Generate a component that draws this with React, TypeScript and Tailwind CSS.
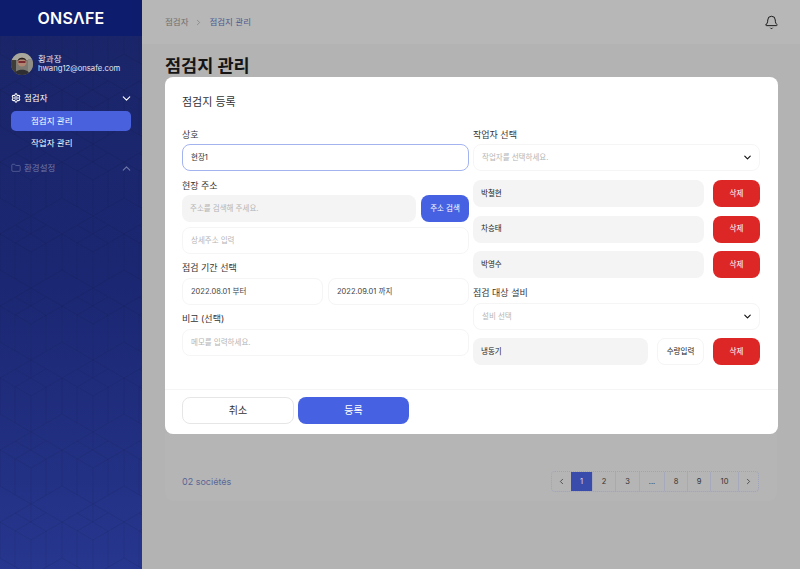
import { Bell, ChevronDown, ChevronLeft, ChevronRight, ChevronUp, Folder, Settings } from "lucide-react";

const FONT = "font-['Inter','Noto_Sans_CJK_KR',sans-serif]";

const pages = [
  { label: "1", w: "w-[22px]", active: true },
  { label: "2", w: "w-[23px]" },
  { label: "3", w: "w-[24px]" },
  { label: "...", w: "w-[25px]" },
  { label: "8", w: "w-[23px]" },
  { label: "9", w: "w-[23px]" },
  { label: "10", w: "w-[28px]" },
];

const Label = ({ text, className = "" }: { text: string; className?: string }) => (
  <div className={`h-3 text-[9px] leading-3 text-[#333333] ${className}`}>{text}</div>
);

const Field = ({ text, className = "" }: { text: string; className?: string }) => (
  <div className={`flex h-[27px] items-center rounded-lg border bg-white px-2 text-[7.5px] ${className}`}>
    {text}
  </div>
);

const DeleteButton = () => (
  <button className="flex h-[27px] w-[47px] shrink-0 items-center justify-center rounded-lg bg-[#dd2626] text-[7.5px] text-white">
    삭제
  </button>
);

const SelectBox = ({ text }: { text: string }) => (
  <div className="flex h-[27px] items-center justify-between rounded-lg border border-[#f5f5f5] bg-white pl-2 pr-[6px] text-[7.5px] text-[#b5b5b5]">
    <span>{text}</span>
    <ChevronDown className="h-[11px] w-[11px] text-[#111111]" strokeWidth={2.5} />
  </div>
);

const Worker = ({ name }: { name: string }) => (
  <div className="flex gap-[9px]">
    <div className="flex h-[27px] flex-1 items-center rounded-lg bg-[#f4f4f4] px-2 text-[7.5px] text-[#222222]">{name}</div>
    <DeleteButton />
  </div>
);

const SidebarPattern = () => (
  <svg className="absolute inset-0 h-full w-full" aria-hidden="true">
    <defs>
      <pattern id="cubes" width="62" height="72" patternUnits="userSpaceOnUse">
        <path
          d="M31 0L62 18V54L31 72L0 54V18ZM31 0V18M0 18L31 36L62 18M31 36V72M15 27V63M46 27V63M15 9L46 27M46 9L15 27"
          fill="none"
          stroke="#000000"
          strokeOpacity="0.07"
          strokeWidth="1"
        />
      </pattern>
    </defs>
    <rect width="100%" height="100%" fill="url(#cubes)" />
  </svg>
);

const Avatar = () => (
  <svg viewBox="0 0 22 22" className="h-[22px] w-[22px] shrink-0 rounded-full">
    <rect width="22" height="22" fill="#7c7a72" />
    <rect x="0" y="0" width="22" height="7" fill="#a8a89e" />
    <rect x="0" y="7" width="5" height="15" fill="#3f3d38" />
    <rect x="17" y="6" width="5" height="16" fill="#8f8d84" />
    <circle cx="11" cy="9" r="4.5" fill="#b08672" />
    <path d="M6.5 8C7 3.5 15 3.5 15.5 8L13 6.5H9Z" fill="#25221f" />
    <rect x="7.5" y="8" width="7" height="2" fill="#7a2a30" />
    <path d="M3 22C4 15 18 15 19 22Z" fill="#2e2e33" />
  </svg>
);

const Sidebar = () => (
  <aside className="relative flex h-full w-[142px] shrink-0 flex-col overflow-hidden bg-gradient-to-b from-[#1a2568] via-[#1b2772] to-[#27368e] text-white">
    <SidebarPattern />
    <div className="relative flex h-[36px] items-center justify-center bg-[#0d1c6c] text-[16px] font-semibold tracking-[0.2px]">
      ONSΛFE
    </div>
    <div className="relative mt-[17px] flex items-center gap-[5px] pl-[11px]">
      <Avatar />
      <div className="text-[7.7px] leading-[10px] text-[#e4e6f2]">
        <div className="text-[8.5px]">황과장</div>
        <div>hwang12@onsafe.com</div>
      </div>
    </div>
    <div className="relative mt-[15px] flex h-[16px] items-center justify-between pl-[11px] pr-[9px] text-[8.5px]">
      <span className="flex items-center gap-[3px]">
        <Settings className="h-[10px] w-[10px]" strokeWidth={2.5} />
        점검자
      </span>
      <ChevronDown className="h-[13px] w-[13px]" strokeWidth={2} />
    </div>
    <div className="relative ml-[11px] mt-[5px] flex h-[20px] w-[120px] items-center rounded-[5px] bg-[#4a61de] pl-[20px] text-[8.5px]">
      점검지 관리
    </div>
    <div className="relative mt-[1px] flex h-[22px] items-center pl-[31px] text-[8.5px]">작업자 관리</div>
    <div className="relative mt-[6px] flex h-[16px] items-center justify-between pl-[11px] pr-[9px] text-[8.5px] text-[#6e77a8]">
      <span className="flex items-center gap-[3px]">
        <Folder className="h-[10px] w-[10px]" strokeWidth={1.5} />
        환경설정
      </span>
      <ChevronUp className="h-[13px] w-[13px]" strokeWidth={2} />
    </div>
  </aside>
);

const Background = () => (
  <>
    <header className="flex h-[44px] items-center justify-between bg-[#b7b7b7] pl-[23px] pr-[21px]">
      <div className="flex items-center text-[8.5px] text-[#6f6f6f]">
        <span>점검자</span>
        <ChevronRight className="mx-[6px] h-[9px] w-[9px]" strokeWidth={1.5} />
        <span className="text-[#4f5a90]">점검지 관리</span>
      </div>
      <Bell className="h-[15px] w-[15px] text-[#111111]" strokeWidth={1.5} />
    </header>
    <h1 className="ml-[23px] mt-[10px] text-[17.5px] font-bold leading-[24px] text-[#151515]">점검지 관리</h1>
    <div className="ml-[23px] mr-[23px] mt-[355px] flex h-[68px] items-start justify-between rounded-b-lg bg-[#b5b5b5] pl-[17px] pr-[18px] pt-[38px]">
      <span className="mt-[4px] text-[9px] text-[#5b6596]">02 sociétés</span>
      <div className="flex h-[21px] items-stretch rounded-[4px] border border-dotted border-[#9ea2bd] text-[7.5px] text-[#333333]">
        <div className="flex w-[19px] items-center justify-center">
          <ChevronLeft className="h-[9px] w-[9px]" strokeWidth={2} />
        </div>
        {pages.map((p) => (
          <div
            key={p.label}
            className={`flex items-center justify-center border-r border-[#a6a8bb] ${p.w} ${p.active ? "bg-[#3a4cab] text-[#d8dcf2]" : ""}`}
          >
            {p.label}
          </div>
        ))}
        <div className="flex w-[19px] items-center justify-center">
          <ChevronRight className="h-[9px] w-[9px]" strokeWidth={2} />
        </div>
      </div>
    </div>
  </>
);

const Modal = () => (
  <div className="absolute left-[23px] top-[77px] h-[357px] w-[613px] overflow-hidden rounded-lg bg-white">
    <div className="pl-[17px] pt-[18px] text-[11px] leading-[14px] text-[#333333]">점검지 등록</div>
    <div className="mt-[20px] grid grid-cols-2 gap-x-1 pl-[17px] pr-[18px]">
      <div className="flex flex-col">
        <Label text="상호" />
        <Field text="현장1" className="mt-[3px] border-[#a3b3f0] text-[#333333]" />
        <Label text="현장 주소" className="mt-[9px]" />
        <div className="mt-[3px] flex gap-[5px]">
          <div className="flex h-[27px] flex-1 items-center rounded-lg bg-[#f4f4f4] px-2 text-[7.5px] text-[#b5b5b5]">
            주소를 검색해 주세요.
          </div>
          <button className="flex h-[27px] w-[48px] items-center justify-center rounded-lg bg-[#4662e2] text-[7.5px] text-white">
            주소 검색
          </button>
        </div>
        <Field text="상세주소 입력" className="mt-[5px] border-[#f5f5f5] text-[#b5b5b5]" />
        <Label text="점검 기간 선택" className="mt-[8px]" />
        <div className="mt-[4px] grid grid-cols-2 gap-[5px]">
          <Field text="2022.08.01 부터" className="border-[#f5f5f5] text-[#444444]" />
          <Field text="2022.09.01 까지" className="border-[#f5f5f5] text-[#444444]" />
        </div>
        <Label text="비고 (선택)" className="mt-[8px]" />
        <Field text="메모를 입력하세요." className="mt-[4px] border-[#f5f5f5] text-[#b5b5b5]" />
      </div>
      <div className="flex flex-col">
        <Label text="작업자 선택" />
        <div className="mt-[3px]">
          <SelectBox text="작업자를 선택하세요." />
        </div>
        <div className="mt-[9px] flex flex-col gap-[8.5px]">
          <Worker name="박철현" />
          <Worker name="차승태" />
          <Worker name="박영수" />
        </div>
        <Label text="점검 대상 설비" className="mt-[9px]" />
        <div className="mt-[4px]">
          <SelectBox text="설비 선택" />
        </div>
        <div className="mt-[8px] flex gap-[9px]">
          <div className="flex h-[27px] flex-1 items-center rounded-lg bg-[#f4f4f4] px-2 text-[7.5px] text-[#222222]">냉동기</div>
          <div className="flex h-[27px] w-[47px] items-center justify-center rounded-lg border border-[#f5f5f5] text-[7.5px] text-[#222222]">
            수량입력
          </div>
          <DeleteButton />
        </div>
      </div>
    </div>
    <div className="absolute bottom-0 left-0 right-0 flex h-[45px] gap-[4px] border-t border-[#f5f5f5] pl-[17px] pt-[7px]">
      <button className="flex h-[27px] w-[112px] items-center justify-center rounded-lg border border-[#e6e6e6] bg-white text-[10px] text-[#333333]">
        취소
      </button>
      <button className="flex h-[27px] w-[111px] items-center justify-center rounded-lg bg-[#4662e2] text-[10px] text-white">
        등록
      </button>
    </div>
  </div>
);

const App = () => {
  return (
    <div className={`flex h-[569px] w-[800px] overflow-hidden ${FONT}`}>
      <Sidebar />
      <main className="relative h-full flex-1 bg-[#b3b3b3]">
        <Background />
        <Modal />
      </main>
    </div>
  );
};

export default App;
